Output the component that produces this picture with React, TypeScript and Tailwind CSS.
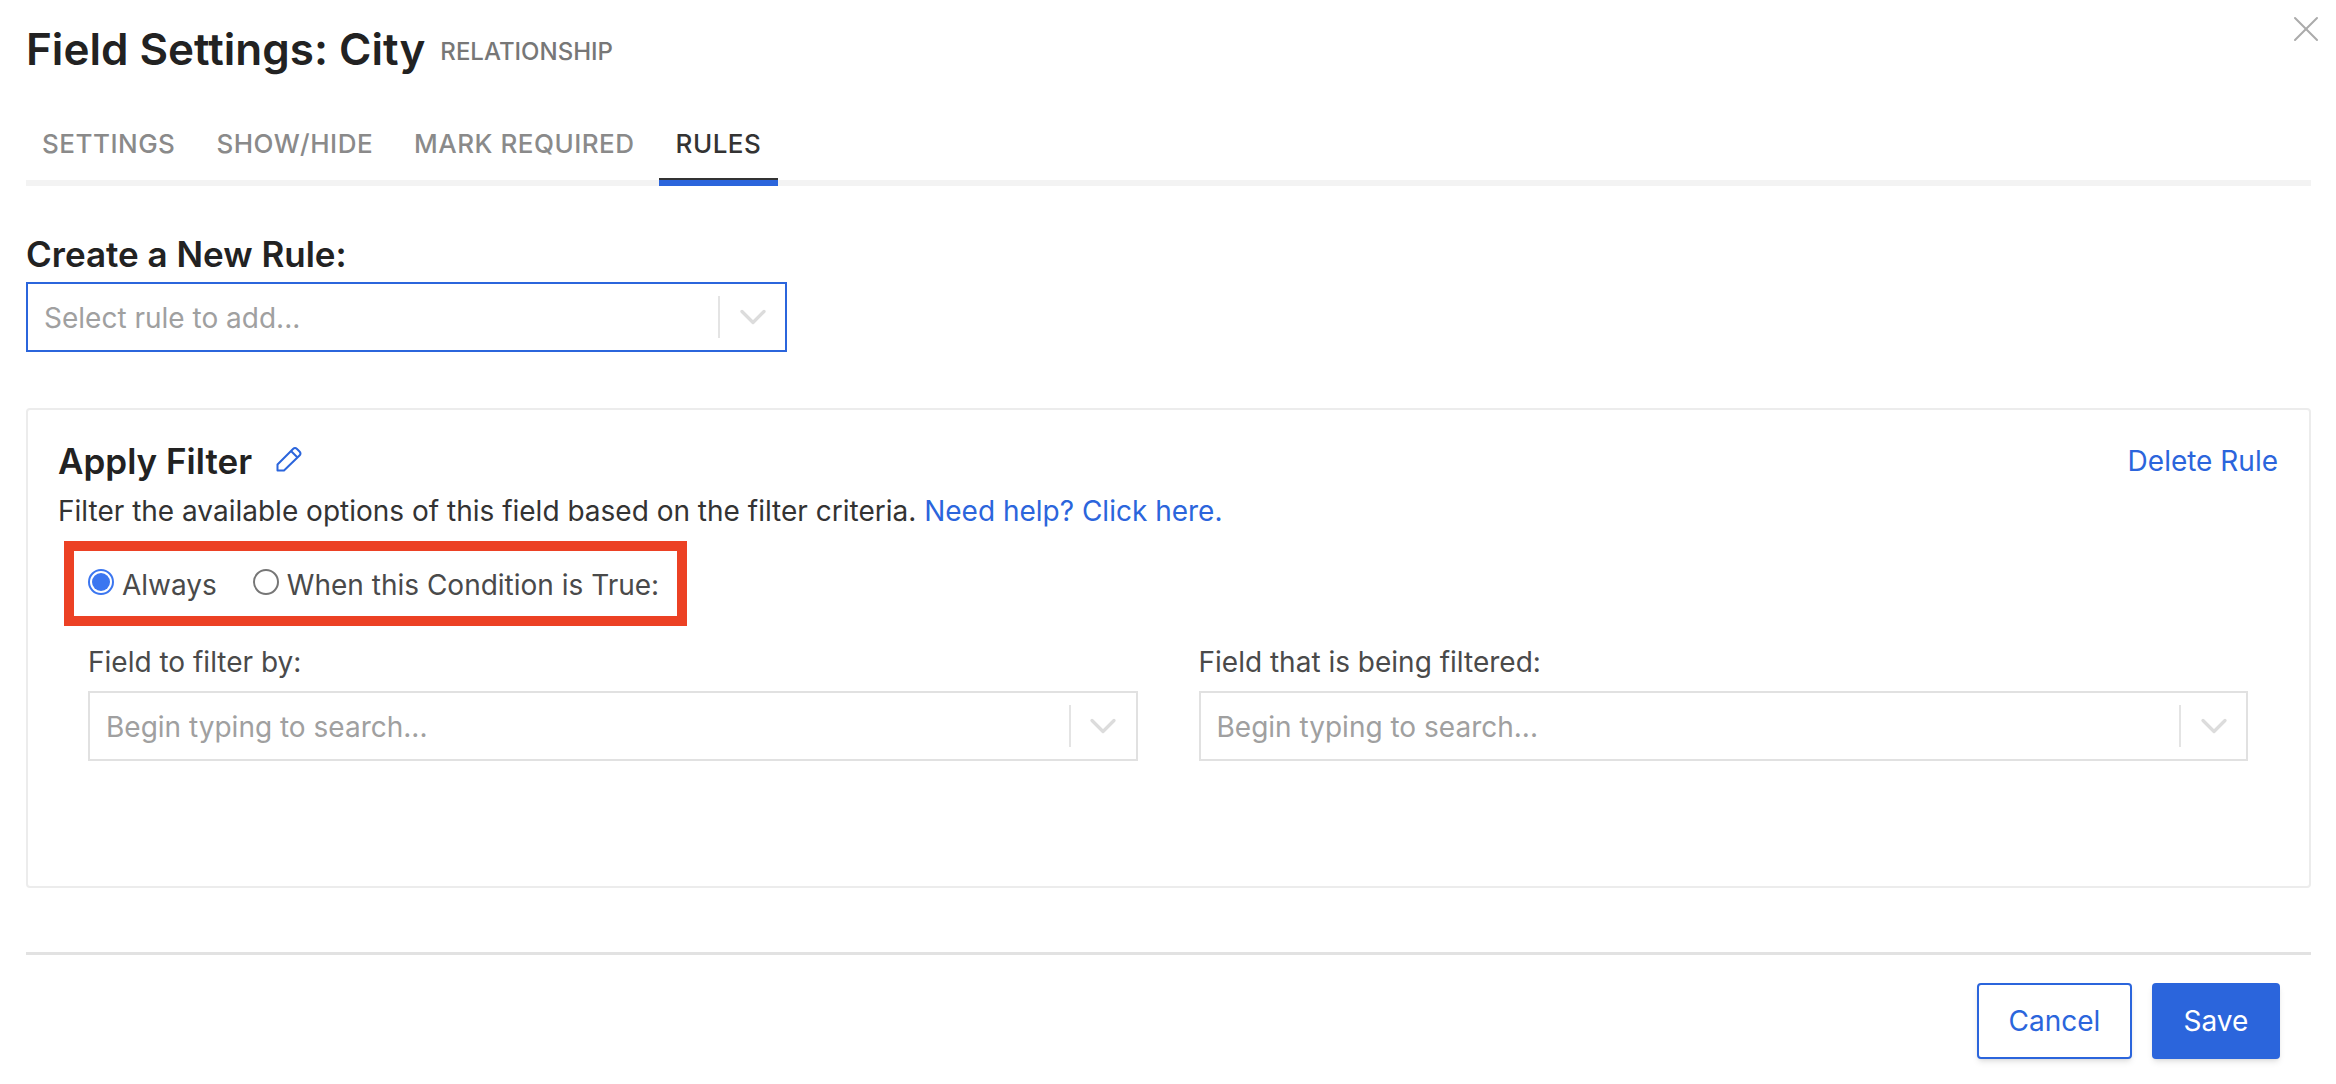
import React from "react";
import { X, ChevronDown } from "lucide-react";

const tabs = ["SETTINGS", "SHOW/HIDE", "MARK REQUIRED", "RULES"];

function SelectBox({
    placeholder,
    active,
}: {
    placeholder: string;
    active?: boolean;
}) {
    return (
        <div
            className={`flex items-center h-[70px] border-2 bg-white ${
                active ? "border-[#2b65dc]" : "border-[#e1e1e1]"
            }`}
        >
            <span className="flex-1 pl-[16px] pt-[2px] text-[28px] text-[#a0a0a0]">
                {placeholder}
            </span>
            <span className="w-[2px] h-[42px] bg-[#e4e4e4]" />
            <span className="w-[65px] flex items-center justify-center">
                <ChevronDown
                    className="w-[44px] h-[44px] text-[#dcdcdc]"
                    strokeWidth={1.8}
                />
            </span>
        </div>
    );
}

function Radio({ checked, label }: { checked?: boolean; label: string }) {
    return (
        <div className="flex items-center gap-[8px]">
            <span
                className={`w-[26px] h-[26px] -mt-[5px] rounded-full border-2 flex items-center justify-center ${
                    checked ? "border-[#3b76f0]" : "border-[#767676]"
                }`}
            >
                {checked && (
                    <span className="w-[18px] h-[18px] rounded-full bg-[#3b76f0]" />
                )}
            </span>
            <span className="text-[28px] text-[#4a4a4a]">{label}</span>
        </div>
    );
}

export default function App() {
    return (
        <div className="relative w-full h-[1084px] bg-white pl-[26px] pr-[25px] font-['Inter',sans-serif] overflow-hidden">
            <X
                className="absolute right-[8px] top-[7px] w-[44px] h-[44px] text-[#ababab]"
                strokeWidth={1.1}
            />

            {/* Title */}
            <div className="flex items-center gap-[15px] h-[100px] pb-[2px]">
                <h1 className="text-[44px] font-semibold text-[#222222] leading-[54px]">
                    Field Settings: City
                </h1>
                <span className="pt-[5px] text-[24px] font-medium text-[#777777]">
                    RELATIONSHIP
                </span>
            </div>

            {/* Tab Navigation */}
            <div className="flex h-[86px] gap-[7px] border-b-[6px] border-[#f3f3f3]">
                {tabs.map((tab) => (
                    <div
                        key={tab}
                        className={`relative flex items-center px-[17px] pt-[6px] text-[26px] font-medium tracking-[0.5px] first:pl-[16px] ${
                            tab === "RULES" ? "text-[#333333]" : "text-[#8a8a8a]"
                        }`}
                    >
                        {tab}
                        {tab === "RULES" && (
                            <span className="absolute left-0 right-0 -bottom-[6px] h-[8px] bg-[#2b65dc] border-t-2 border-[#333333]" />
                        )}
                    </div>
                ))}
            </div>

            {/* New rule */}
            <h2 className="mt-[48px] text-[35px] font-semibold text-[#222222] leading-[40px]">
                Create a New Rule:
            </h2>
            <div className="mt-[8px] w-[761px]">
                <SelectBox placeholder="Select rule to add..." active />
            </div>

            {/* Rule card */}
            <div className="mt-[56px] h-[480px] border-2 border-[#ececec] rounded-[4px] pl-[30px] pr-[31px] pt-[30px]">
                <div className="flex items-center justify-between h-[42px]">
                    <div className="flex items-center gap-[24px]">
                        <h3 className="text-[35px] font-semibold text-[#222222]">
                            Apply Filter
                        </h3>
                        <svg
                            viewBox="0 0 26 26"
                            fill="none"
                            stroke="#2b65dc"
                            strokeWidth="2"
                            strokeLinejoin="round"
                            className="w-[26px] h-[26px] mb-[5px]"
                        >
                            <path d="M1.5 24.5V18.5L17 3Q19 1 21 3L23.5 5.5Q25.5 7.5 23.5 9.5L8 24.5Z" />
                            <path d="M15 5L21.5 11.5" />
                        </svg>
                    </div>
                    <a className="text-[28px] text-[#2b65dc]">Delete Rule</a>
                </div>
                <p className="mt-[9px] text-[28px] leading-[40px] text-[#333333]">
                    Filter the available options of this field based on the
                    filter criteria.{" "}
                    <a className="text-[#2b65dc]">Need help? Click here.</a>
                </p>

                {/* Annotation */}
                <div className="mt-[10px] ml-[6px] w-[623px] h-[85px] border-[10px] border-[#ec4124] flex items-center gap-[36px] pl-[14px] pt-[2px]">
                    <Radio checked label="Always" />
                    <Radio label="When this Condition is True:" />
                </div>

                <div className="mt-[16px] pl-[30px] pr-[30px] grid grid-cols-2 gap-[61px]">
                    <div>
                        <label className="block text-[28px] leading-[40px] text-[#4a4a4a]">
                            Field to filter by:
                        </label>
                        <div className="mt-[9px]">
                            <SelectBox placeholder="Begin typing to search..." />
                        </div>
                    </div>
                    <div>
                        <label className="block text-[28px] leading-[40px] text-[#4a4a4a]">
                            Field that is being filtered:
                        </label>
                        <div className="mt-[9px]">
                            <SelectBox placeholder="Begin typing to search..." />
                        </div>
                    </div>
                </div>
            </div>

            {/* Footer */}
            <div className="mt-[64px] border-t-[3px] border-[#e2e2e2] pt-[28px] pr-[31px] flex justify-end gap-[20px]">
                <button className="w-[155px] h-[76px] rounded-[4px] border-2 border-[#2b65dc] bg-white text-[28px] text-[#2b65dc] shadow-md">
                    Cancel
                </button>
                <button className="w-[128px] h-[76px] rounded-[4px] bg-[#2b65dc] text-[28px] text-white shadow-md">
                    Save
                </button>
            </div>
        </div>
    );
}
